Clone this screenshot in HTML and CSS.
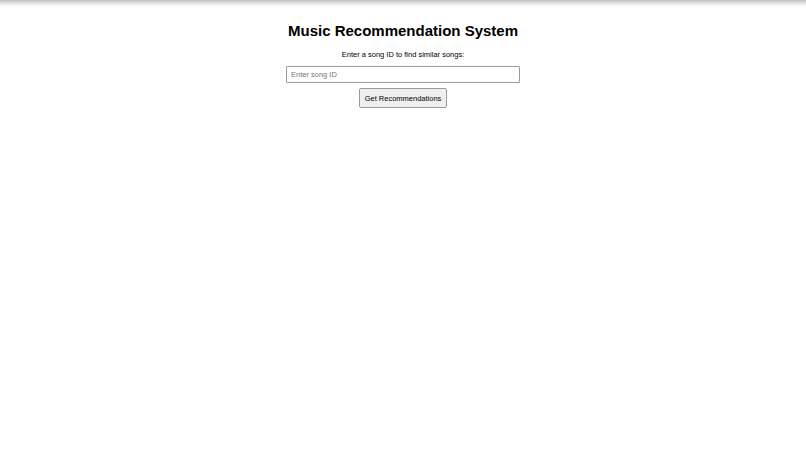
FILE: index.html
```html
<!DOCTYPE html>
<html lang="en">
<head>
<meta charset="utf-8">
<title>Music Recommendation System</title>
<link rel="stylesheet" href="styles.css">
</head>
<body>
<div class="topshade"></div>
<main class="app">
  <h1 class="title">Music Recommendation System</h1>
  <p class="lead">Enter a song ID to find similar songs:</p>
  <input class="song-input" type="text" placeholder="Enter song ID">
  <button class="go" type="button">Get Recommendations</button>
</main>
</body>
</html>
```

FILE: styles.css
```css
html, body {
  margin: 0;
  padding: 0;
  background: #fff;
}

body {
  font-family: "Liberation Sans", Arial, sans-serif;
  color: #000;
}

.topshade {
  height: 7px;
  background: linear-gradient(to bottom, #bdbdbd 0%, #dcdcdc 35%, #f4f4f4 75%, #ffffff 100%);
}

.app {
  display: flex;
  flex-direction: column;
  align-items: center;
  padding-top: 15px;
}

.title {
  margin: 0;
  font-size: 15px;
  font-weight: bold;
  line-height: 18px;
}

.lead {
  margin: 10px 0 0;
  font-size: 7.5px;
  line-height: 9px;
}

.song-input {
  box-sizing: border-box;
  width: 234px;
  height: 17px;
  margin-top: 7px;
  padding: 0 4px;
  border: 1px solid #9a9a9a;
  border-radius: 1px;
  font-family: inherit;
  font-size: 7.5px;
  color: #000;
  outline: none;
}

.song-input::placeholder {
  color: #777;
}

.go {
  box-sizing: border-box;
  margin-top: 5px;
  width: 88px;
  height: 20px;
  padding: 0;
  border: 1px solid #9a9a9a;
  border-radius: 2px;
  background: #efefef;
  font-family: inherit;
  font-size: 7.5px;
  color: #000;
}
```
